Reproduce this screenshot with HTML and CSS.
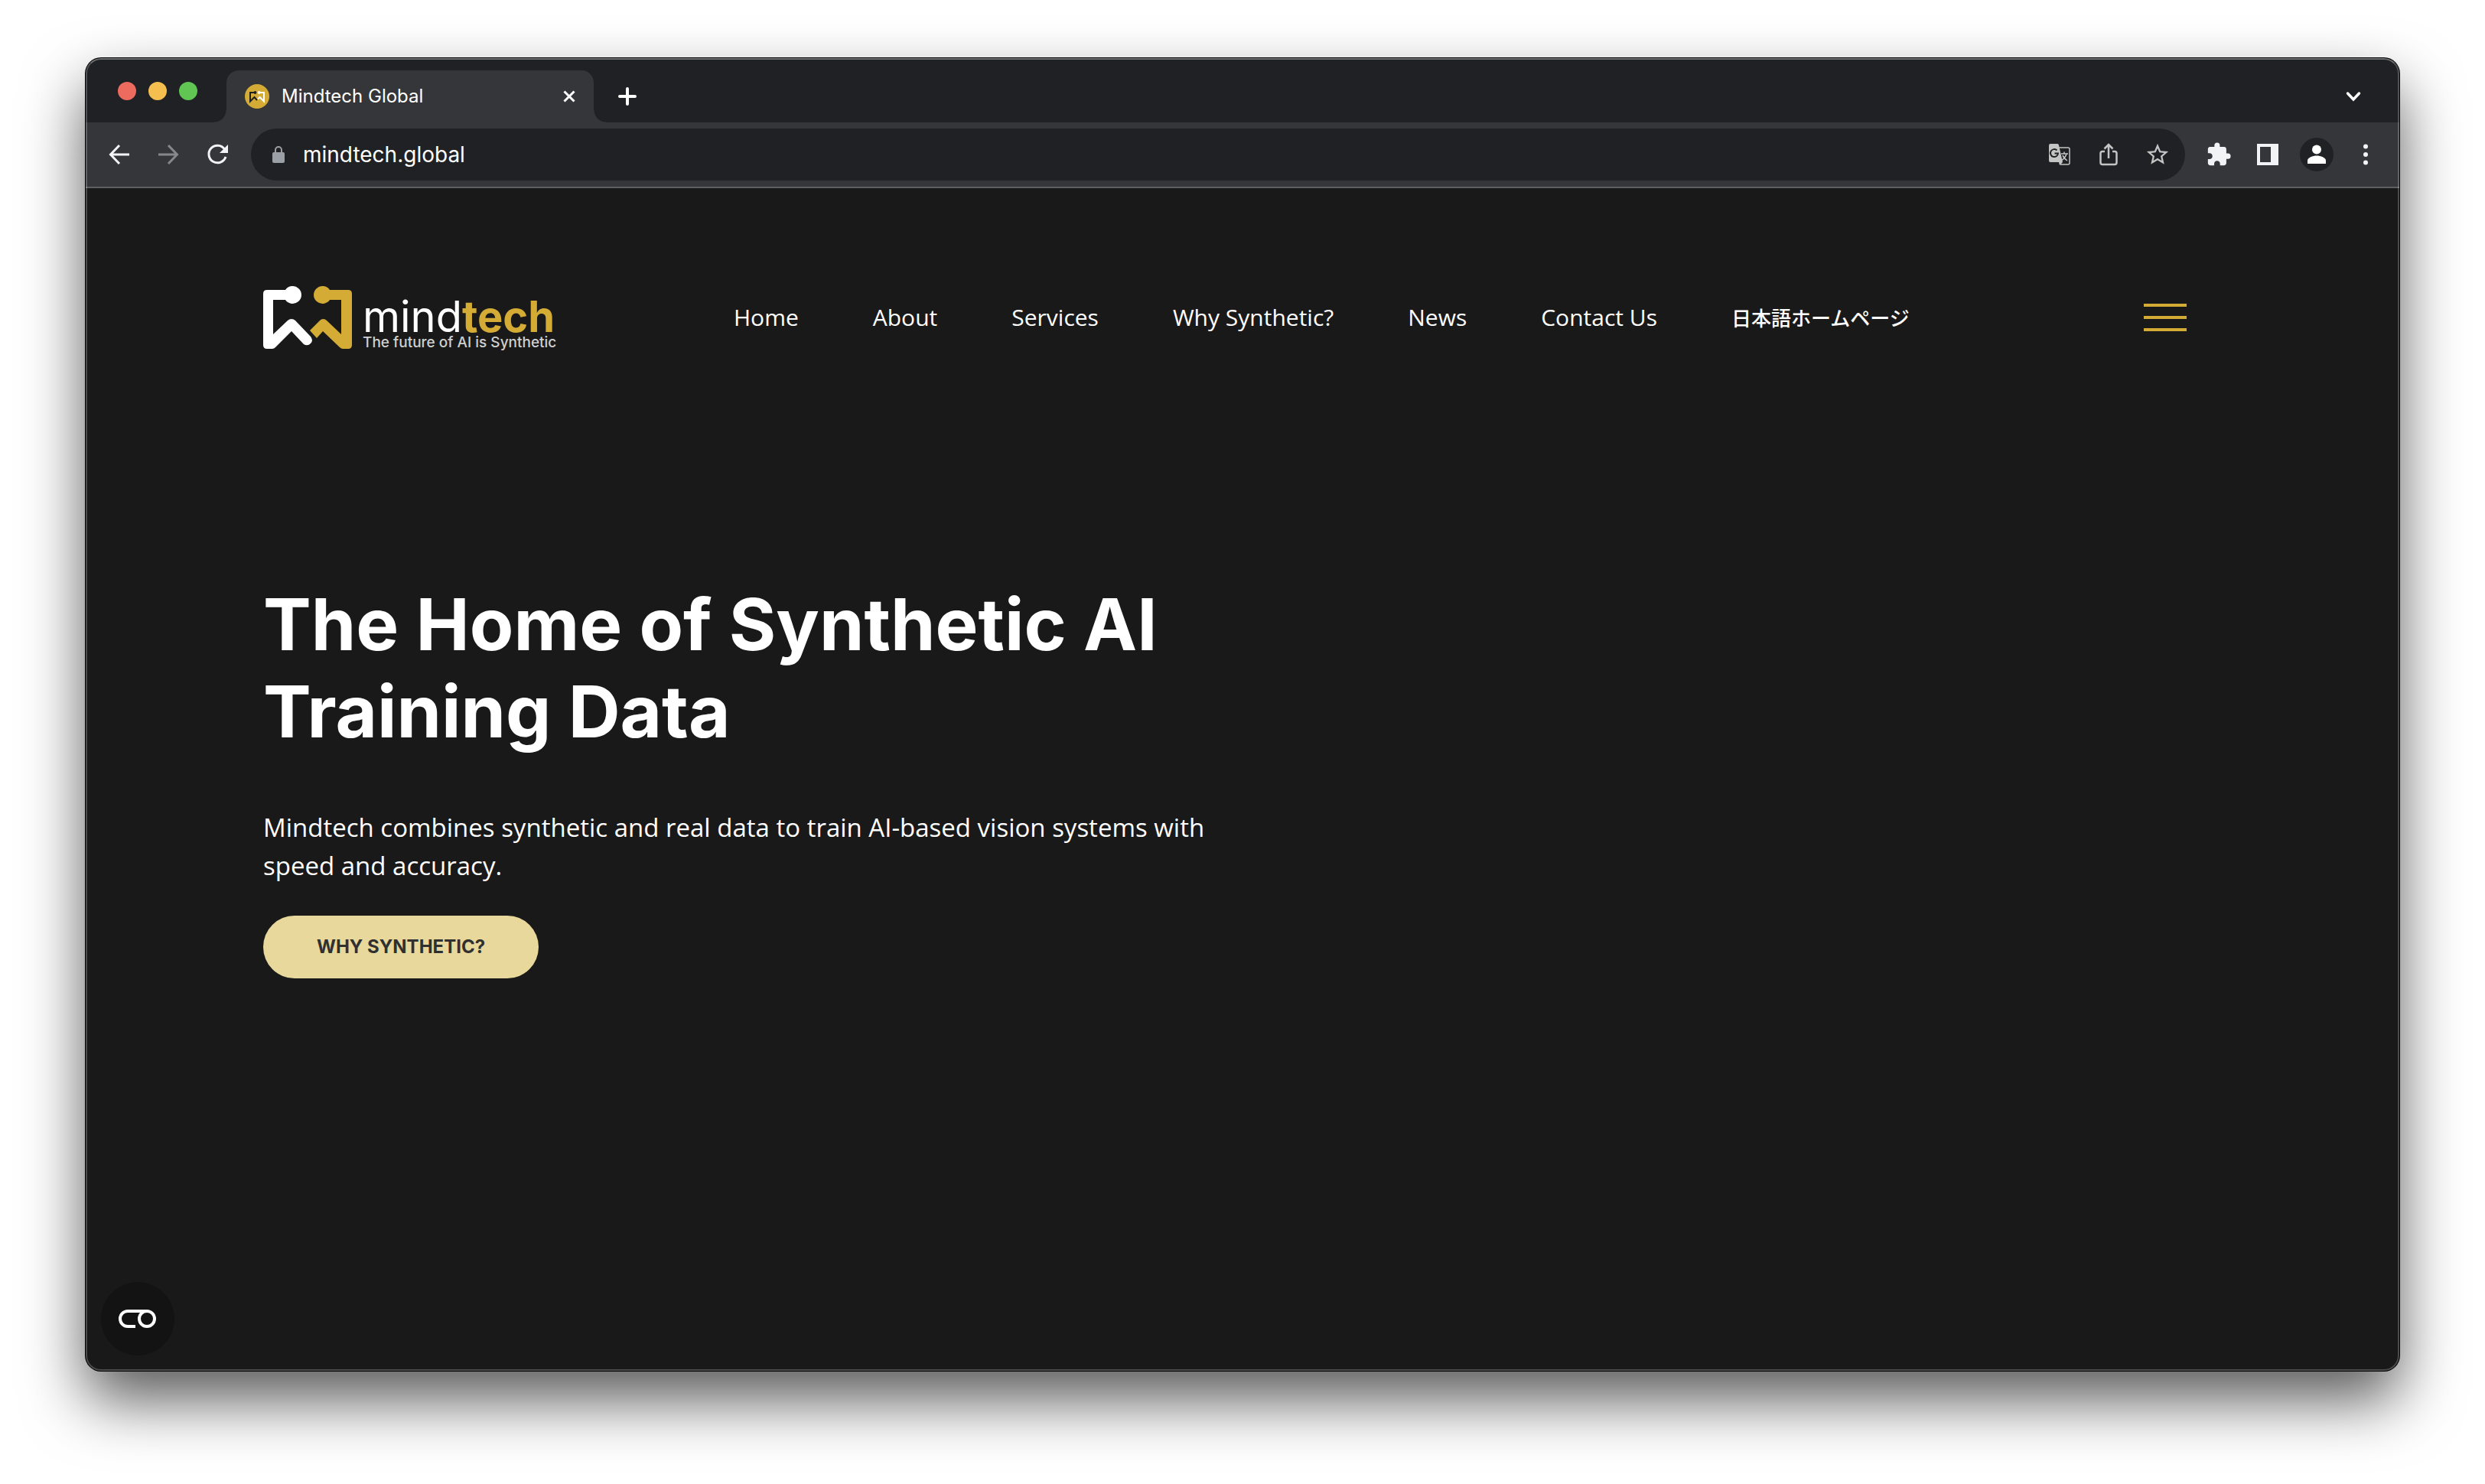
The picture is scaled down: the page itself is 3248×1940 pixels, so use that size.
FILE: index.html
```html
<!DOCTYPE html>
<html lang="en">

<head>
    <meta charset="utf-8">
    <title>Mindtech Global</title>
    <link rel="stylesheet" href="styles.css">
</head>

<body>
    <div class="window">
        <div class="tab-strip">
            <div class="lights">
                <span class="light red"></span>
                <span class="light yellow"></span>
                <span class="light green"></span>
            </div>
            <div class="tab">
                <svg class="favicon" viewBox="0 0 32 32">
                    <circle cx="16" cy="16" r="16" fill="#d4ac35" />
                    <path d="M13 11H7v11.500l5.500-5.500 3.500 4" fill="none" stroke="#202124" stroke-width="2" />
                    <circle cx="13.500" cy="11" r="1.900" fill="#202124" />
                    <path d="M19 11h6v11.500L19.500 17 17 19.500" fill="none" stroke="#fff" stroke-width="2" />
                    <circle cx="18.500" cy="11" r="1.900" fill="#fff" />
                </svg>
                <span class="tab-title">Mindtech Global</span>
                <button class="icon-btn tab-close" aria-label="Close tab">
                    <svg width="16" height="16" viewBox="0 0 16 16"><path d="M1.500 1.500l13 13M14.500 1.500l-13 13" stroke="#fff" stroke-width="3" /></svg>
                </button>
            </div>
            <button class="icon-btn new-tab" aria-label="New tab">
                <svg width="24" height="24" viewBox="0 0 24 24"><path d="M12 2v20M2 12h20" stroke="#fff" stroke-width="4" stroke-linecap="round" /></svg>
            </button>
            <button class="icon-btn tab-search" aria-label="Search tabs">
                <svg width="20" height="14" viewBox="0 0 20 14"><path d="M2.500 3L10 11l7.500-8" fill="none" stroke="#fff" stroke-width="3.500" stroke-linecap="round" /></svg>
            </button>
        </div>

        <div class="toolbar">
            <button class="icon-btn" aria-label="Back">
                <svg width="28" height="28" viewBox="0 0 28 28"><path d="M27 14H3M14 2L2.500 14 14 26" fill="none" stroke="#f1f3f4" stroke-width="3" /></svg>
            </button>
            <button class="icon-btn" aria-label="Forward">
                <svg width="28" height="28" viewBox="0 0 28 28"><path d="M1 14h24M14 2l11.500 12L14 26" fill="none" stroke="#86878a" stroke-width="3" /></svg>
            </button>
            <button class="icon-btn" aria-label="Reload">
                <svg width="28" height="28" viewBox="0 0 28 28"><path d="M23.500 7A11.300 11.300 0 1 0 25 17" fill="none" stroke="#f1f3f4" stroke-width="3" /><path d="M28 1v11H17z" fill="#f1f3f4" /></svg>
            </button>
            <div class="omnibox">
                <svg class="lock" width="16" height="22" viewBox="0 0 16 22"><rect y="8" width="16" height="14" rx="2" fill="#9aa0a6" /><path d="M4 9V5a4 4 0 0 1 8 0v4" fill="none" stroke="#9aa0a6" stroke-width="2" /></svg>
                <input class="url" type="text" value="mindtech.global" aria-label="Address">
                <button class="icon-btn" aria-label="Translate">
                    <svg width="28" height="28" viewBox="0 0 28 28"><path d="M12 5h13a2 2 0 0 1 2 2v18a2 2 0 0 1-2 2H15" fill="none" stroke="#c4c4c4" stroke-width="1.500" /><path d="M2 0h9a2 2 0 0 1 2 2l5 22-4 4-1-4H2a2 2 0 0 1-2-2V2a2 2 0 0 1 2-2z" fill="#c4c4c4" /><path d="M10.500 8.500a5 5 0 1 0 1.500 4H7.500" fill="none" stroke="#202124" stroke-width="2" /><path d="M16 13h9M20 10.500V13M23 13c-1 4-3 6-6 8.500M18 15c1 3 3 5 6 7" fill="none" stroke="#c4c4c4" stroke-width="1.500" /></svg>
                </button>
                <button class="icon-btn" aria-label="Share">
                    <svg width="24" height="30" viewBox="0 0 24 30"><path d="M7 11H4a2.500 2.500 0 0 0-2.500 2.500v12A2.500 2.500 0 0 0 4 28h16a2.500 2.500 0 0 0 2.500-2.500v-12A2.500 2.500 0 0 0 20 11h-3M12 20V3M6.500 7.500L12 2l5.500 5.500" fill="none" stroke="#c4c4c4" stroke-width="2.500" /></svg>
                </button>
                <button class="icon-btn" aria-label="Bookmark">
                    <svg width="34" height="34" viewBox="0 0 24 24"><path d="M22 9.240l-7.190-.62L12 2 9.190 8.630 2 9.240l5.460 4.730L5.820 21 12 17.270 18.180 21l-1.630-7.030L22 9.240zM12 15.400l-3.760 2.270 1-4.280-3.320-2.880 4.380-.38L12 6.100l1.710 4.040 4.380.38-3.320 2.880 1 4.280L12 15.400z" fill="#c4c4c4" /></svg>
                </button>
            </div>
            <div class="actions">
                <button class="icon-btn" aria-label="Extensions">
                    <svg width="34" height="34" viewBox="0 0 24 24"><path d="M20.500 11H19V7c0-1.100-.9-2-2-2h-4V3.500a2.500 2.500 0 0 0-5 0V5H4c-1.100 0-1.990.9-1.990 2v3.800H3.500c1.490 0 2.700 1.210 2.700 2.700s-1.210 2.700-2.700 2.700H2V20c0 1.100.9 2 2 2h3.800v-1.500c0-1.490 1.210-2.700 2.700-2.700s2.700 1.210 2.700 2.700V22H17c1.100 0 2-.9 2-2v-4h1.500a2.500 2.500 0 0 0 0-5z" fill="#f1f3f4" /></svg>
                </button>
                <button class="icon-btn" aria-label="Side panel">
                    <svg width="28" height="28" viewBox="0 0 28 28"><path d="M0 0h28v28H0zM4 4v20h14V4z" fill="#f1f3f4" fill-rule="evenodd" /></svg>
                </button>
                <button class="icon-btn profile" aria-label="Profile">
                    <svg width="24" height="26" viewBox="0 0 24 26"><circle cx="12" cy="6.500" r="6" fill="#fff" /><path d="M0 25v-4c0-4 7-6.500 12-6.500S24 17 24 21v4z" fill="#fff" /></svg>
                </button>
                <button class="icon-btn" aria-label="Menu">
                    <svg width="6" height="28" viewBox="0 0 6 28"><circle cx="3" cy="3.500" r="3" fill="#f1f3f4" /><circle cx="3" cy="14" r="3" fill="#f1f3f4" /><circle cx="3" cy="24.500" r="3" fill="#f1f3f4" /></svg>
                </button>
            </div>
        </div>

        <div class="page">
            <div class="header">
                <a class="logo" href="#">
                    <svg width="116" height="82" viewBox="0 0 116 82">
                        <path d="M5 5h24a11.500 11.500 0 1 1 0 13H13v45l19-18a7 7 0 0 1 10 0l20 21q4 5 0 9t-9 1L37 59 16 80q-2 2-4 2H5q-5 0-5-5V10q0-5 5-5z" fill="#fff" />
                        <path d="M111 5H87a11.500 11.500 0 1 0 0 13h15v45L83 45a6 6 0 0 0-9 0L61 58l9 10 8-9 22 21q2 2 4 2h7q5 0 5-5V10q0-5-5-5z" fill="#d4ac35" />
                    </svg>
                    <span class="logo-text">
                        <span class="logo-name">mind<b>tech</b></span>
                        <span class="logo-tagline">The future of AI is Synthetic</span>
                    </span>
                </a>
                <ul class="nav-links">
                    <li><a href="#">Home</a></li>
                    <li><a href="#">About</a></li>
                    <li><a href="#">Services</a></li>
                    <li><a href="#">Why Synthetic?</a></li>
                    <li><a href="#">News</a></li>
                    <li><a href="#">Contact Us</a></li>
                    <li class="jp"><a lang="ja" href="#">日本語ホームページ</a></li>
                </ul>
                <button class="burger" aria-label="Open menu">
                    <span></span>
                    <span></span>
                    <span></span>
                </button>
            </div>

            <div class="hero">
                <h1>The Home of Synthetic AI Training Data</h1>
                <p>Mindtech combines synthetic and real data to train AI-based vision systems with speed and accuracy.</p>
                <a class="hero-btn" href="#">WHY SYNTHETIC?</a>
            </div>

            <button class="cookie-btn" aria-label="Cookie settings">
                <svg width="50" height="24" viewBox="0 0 50 24"><path d="M22 22H12A10 10 0 0 1 12 2h25" fill="none" stroke="#fff" stroke-width="4" /><circle cx="37" cy="12" r="10" fill="none" stroke="#fff" stroke-width="4" /></svg>
            </button>
        </div>
    </div>
</body>

</html>
```

FILE: styles.css
```css
* {
    box-sizing: border-box;
}

body {
    margin: 0;
    padding: 76px 112px 148px;
    min-height: 100vh;
    display: flex;
    background-color: #ffffff;
    font-family: "Open Sans", "Noto Sans", sans-serif;
    color: #ffffff;
}

a {
    color: inherit;
    text-decoration: none;
}

.window {
    position: relative;
    flex: 1;
    display: flex;
    flex-direction: column;
    border-radius: 20px;
    overflow: hidden;
    background-color: #191919;
    box-shadow: 0 0 0 1px #000000, 0 38px 80px rgba(0, 0, 0, 0.65);
}

/* light rim drawn over the window edge */
.window::after {
    content: "";
    position: absolute;
    inset: 0;
    border-radius: 20px;
    border: 2px solid rgba(255, 255, 255, 0.22);
    border-top-color: rgba(255, 255, 255, 0.35);
    pointer-events: none;
}

.icon-btn {
    display: flex;
    justify-content: center;
    align-items: center;
    width: 64px;
    height: 64px;
    padding: 0;
    border: none;
    background: none;
    cursor: pointer;
}

/* tabs */
.tab-strip {
    display: flex;
    align-items: flex-end;
    height: 84px;
    background-color: #202124;
}

.lights {
    display: flex;
    gap: 16px;
    align-self: center;
    width: 184px;
    padding: 2px 0 0 42px;
}

.light {
    width: 24px;
    height: 24px;
    border-radius: 50%;
}

.red {
    background-color: #ed6a5e;
}

.yellow {
    background-color: #f5bf4f;
}

.green {
    background-color: #61c554;
}

.tab {
    position: relative;
    display: flex;
    align-items: center;
    width: 480px;
    height: 68px;
    padding-left: 24px;
    border-radius: 16px 16px 0 0;
    background-color: #35363a;
}

.tab::before,
.tab::after {
    content: "";
    position: absolute;
    bottom: 0;
    width: 16px;
    height: 16px;
}

.tab::before {
    right: 100%;
    background: radial-gradient(circle at 0 0, transparent 15px, #35363a 16px);
}

.tab::after {
    left: 100%;
    background: radial-gradient(circle at 100% 0, transparent 15px, #35363a 16px);
}

.favicon {
    width: 32px;
    height: 32px;
}

.tab-title {
    flex: 1;
    padding-left: 16px;
    font-family: Inter, sans-serif;
    font-size: 24px;
    line-height: 28px;
}

.new-tab {
    margin-left: 12px;
    height: 68px;
}

.tab-search {
    margin-left: auto;
    margin-right: 28px;
    height: 68px;
}

/* toolbar */
.toolbar {
    display: flex;
    align-items: center;
    height: 86px;
    padding: 0 12px;
    border-bottom: 2px solid #5f6063;
    background-color: #35363a;
}

.omnibox {
    flex: 1;
    display: flex;
    align-items: center;
    height: 68px;
    margin-left: 12px;
    padding: 0 4px 0 28px;
    border-radius: 34px;
    background-color: #202124;
}

.url {
    flex: 1;
    margin-left: 24px;
    padding: 0;
    border: none;
    outline: none;
    background: none;
    font-family: Inter, sans-serif;
    font-size: 28px;
    color: #ffffff;
}

.actions {
    display: flex;
    align-items: center;
    padding-left: 12px;
}

.profile {
    width: 44px;
    height: 44px;
    margin: 0 10px;
    border-radius: 50%;
    background-color: #202124;
}

/* page */
.page {
    position: relative;
    flex: 1;
    padding: 118px 278px 0 232px;
}

.header {
    display: flex;
    align-items: center;
    height: 102px;
}

.logo {
    display: flex;
    width: 615px;
}

.logo-text {
    display: flex;
    flex-direction: column;
    padding: 16px 0 0 14px;
    font-family: Inter, sans-serif;
}

.logo-name {
    font-size: 56px;
    line-height: 48px;
}

.logo-name b {
    color: #d4ac35;
}

.logo-tagline {
    font-size: 19px;
    line-height: 19px;
    font-weight: 500;
    color: #cfcfcf;
}

.nav-links {
    display: flex;
    gap: 97px;
    margin: 0;
    padding: 0;
    list-style: none;
    font-size: 30px;
    line-height: 40px;
    white-space: nowrap;
}

.jp {
    font-family: "Noto Sans CJK JP", sans-serif;
    font-size: 26px;
    font-weight: 500;
}

.burger {
    display: flex;
    flex-direction: column;
    gap: 12px;
    margin-left: auto;
    padding: 0;
    border: none;
    background: none;
    cursor: pointer;
}

.burger span {
    width: 56px;
    height: 4px;
    background-color: #d4ac35;
}

.hero {
    max-width: 1260px;
    padding-top: 293px;
}

h1 {
    margin: 0;
    font-family: Inter, sans-serif;
    font-size: 94px;
    line-height: 114px;
    font-weight: 700;
}

.hero p {
    margin: 70px 0 40px;
    font-size: 33px;
    line-height: 50px;
}

.hero-btn {
    display: inline-block;
    padding: 0 70px;
    border-radius: 41px;
    background-color: #e9d89b;
    color: #303030;
    font-family: Inter, sans-serif;
    font-size: 24px;
    line-height: 82px;
    font-weight: 700;
}

.cookie-btn {
    position: absolute;
    left: 20px;
    bottom: 20px;
    display: flex;
    justify-content: center;
    align-items: center;
    width: 96px;
    height: 96px;
    padding: 0;
    border: none;
    border-radius: 50%;
    background-color: #131313;
    cursor: pointer;
}
```
